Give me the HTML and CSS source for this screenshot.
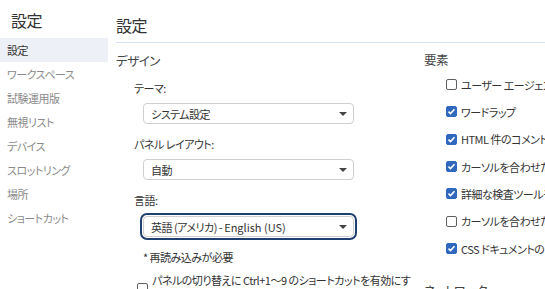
FILE: index.html
```html
<!DOCTYPE html>
<html lang="ja">
<head>
    <meta charset="UTF-8">
    <title>設定</title>
    <link rel="stylesheet" href="styles.css">
</head>
<body>
    <div class="app">
        <nav class="sidebar">
            <p class="sidebar-title">設定</p>
            <a class="nav-item active">設定</a>
            <a class="nav-item">ワークスペース</a>
            <a class="nav-item">試験運用版</a>
            <a class="nav-item">無視リスト</a>
            <a class="nav-item">デバイス</a>
            <a class="nav-item">スロットリング</a>
            <a class="nav-item">場所</a>
            <a class="nav-item">ショートカット</a>
        </nav>

        <main class="main">
            <h1 class="page-title">設定</h1>
            <div class="columns">
                <section class="column">
                    <h2 class="section-title">デザイン</h2>

                    <p class="field-label">テーマ:</p>
                    <div class="select">
                        <span>システム設定</span>
                        <svg class="arrow" width="8" height="4" viewBox="0 0 8 4"><path d="M0 0h8L4 4z" fill="#444"/></svg>
                    </div>

                    <p class="field-label">パネル レイアウト:</p>
                    <div class="select">
                        <span>自動</span>
                        <svg class="arrow" width="8" height="4" viewBox="0 0 8 4"><path d="M0 0h8L4 4z" fill="#444"/></svg>
                    </div>

                    <p class="field-label">言語:</p>
                    <div class="select focused">
                        <span>英語 (アメリカ) - <span class="latin">English (US)</span></span>
                        <svg class="arrow" width="8" height="4" viewBox="0 0 8 4"><path d="M0 0h8L4 4z" fill="#444"/></svg>
                    </div>

                    <p class="note">* 再読み込みが必要</p>

                    <label class="check-row wrap">
                        <span class="box"></span>
                        <span class="check-text">パネルの切り替えに Ctrl+1〜9 のショートカットを有効にする</span>
                    </label>
                </section>

                <section class="column right">
                    <h2 class="section-title">要素</h2>
                    <label class="check-row"><span class="box"></span>ユーザー エージェントの Shadow DOM を表示</label>
                    <label class="check-row"><span class="box checked"><svg width="9" height="9" viewBox="0 0 9 9"><path d="M1.5 4.6l2 2 4-4.4" fill="none" stroke="#fff" stroke-width="1.6"/></svg></span>ワードラップ</label>
                    <label class="check-row"><span class="box checked"><svg width="9" height="9" viewBox="0 0 9 9"><path d="M1.5 4.6l2 2 4-4.4" fill="none" stroke="#fff" stroke-width="1.6"/></svg></span>HTML 件のコメントを表示</label>
                    <label class="check-row"><span class="box checked"><svg width="9" height="9" viewBox="0 0 9 9"><path d="M1.5 4.6l2 2 4-4.4" fill="none" stroke="#fff" stroke-width="1.6"/></svg></span>カーソルを合わせた DOM ノードを表示</label>
                    <label class="check-row"><span class="box checked"><svg width="9" height="9" viewBox="0 0 9 9"><path d="M1.5 4.6l2 2 4-4.4" fill="none" stroke="#fff" stroke-width="1.6"/></svg></span>詳細な検査ツールチップを表示</label>
                    <label class="check-row"><span class="box"></span>カーソルを合わせたときにルーラーを表示</label>
                    <label class="check-row"><span class="box checked"><svg width="9" height="9" viewBox="0 0 9 9"><path d="M1.5 4.6l2 2 4-4.4" fill="none" stroke="#fff" stroke-width="1.6"/></svg></span>CSS ドキュメントのツールチップを表示</label>
                    <h2 class="section-title sub">ネットワーク</h2>
                </section>
            </div>
        </main>
    </div>
</body>
</html>
```

FILE: styles.css
```css
* { box-sizing: border-box; margin: 0; padding: 0; }
body {
    font-family: "Noto Sans CJK JP", "Noto Sans", sans-serif;
    font-feature-settings: "palt";
    font-size: 11px;
    letter-spacing: -0.5px;
    color: #333;
    background: #fff;
    width: 545px;
    height: 289px;
    overflow: hidden;
}
.app { display: flex; height: 100%; }
.latin { letter-spacing: 0; }

/* サイドバー */
.sidebar { width: 108px; flex: none; display: flex; flex-direction: column; }
.sidebar-title {
    font-size: 16px;
    line-height: 24px;
    padding: 8px 0 6px 11px;
    color: #333;
}
.nav-item {
    display: block;
    line-height: 24px;
    padding-left: 7px;
    color: #8a8a8a;
}
.nav-item.active { background: #eef0f7; color: #333; }

/* メイン */
.main { flex: 1; padding-left: 8px; min-width: 0; }
.page-title {
    font-size: 16px;
    font-weight: 400;
    line-height: 24px;
    padding-top: 13px;
    height: 43px;
    border-bottom: 1px solid #d6e2fb;
}
.columns { display: flex; }
.column { width: 308px; flex: none; display: flex; flex-direction: column; align-items: flex-start; }
.section-title {
    font-size: 12.5px;
    font-weight: 400;
    line-height: 20px;
    margin-top: 8px;
    color: #444;
}
.field-label { line-height: 16px; margin: 9px 0 0 18px; }
.field-label + .select { margin-top: 7px; }
.select + .field-label { margin-top: 12px; }

.select {
    display: flex;
    align-items: center;
    justify-content: space-between;
    width: 211px;
    height: 21px;
    margin-left: 27px;
    padding: 0 6px 0 7px;
    border: 1px solid #cfcfcf;
    border-radius: 4px;
    color: #333;
}
.select.focused {
    outline: 2px solid #1f3f70;
    outline-offset: 1px;
    margin-top: 8px !important;
}
.note { line-height: 16px; margin: 12px 0 0 27px; }

.check-row {
    display: flex;
    align-items: center;
    gap: 4px;
    line-height: 16px;
    white-space: nowrap;
}
.check-row.wrap { white-space: normal; margin: 7px 0 0 21px; width: 282px; }
.check-text { flex: 1; }
.box {
    width: 11px;
    height: 11px;
    flex: none;
    border: 1px solid #5f5f5f;
    border-radius: 2px;
    background: #fff;
    display: flex;
    align-items: center;
    justify-content: center;
}
.box.checked { background: #2f68bd; border-color: #2f68bd; }

.right .section-title { margin-top: 7px; }
.right .check-row { height: 27.33px; margin-left: 22px; }
.right .section-title + .check-row { margin-top: 1px; }
.right .section-title.sub { margin-top: 19px; }
```
